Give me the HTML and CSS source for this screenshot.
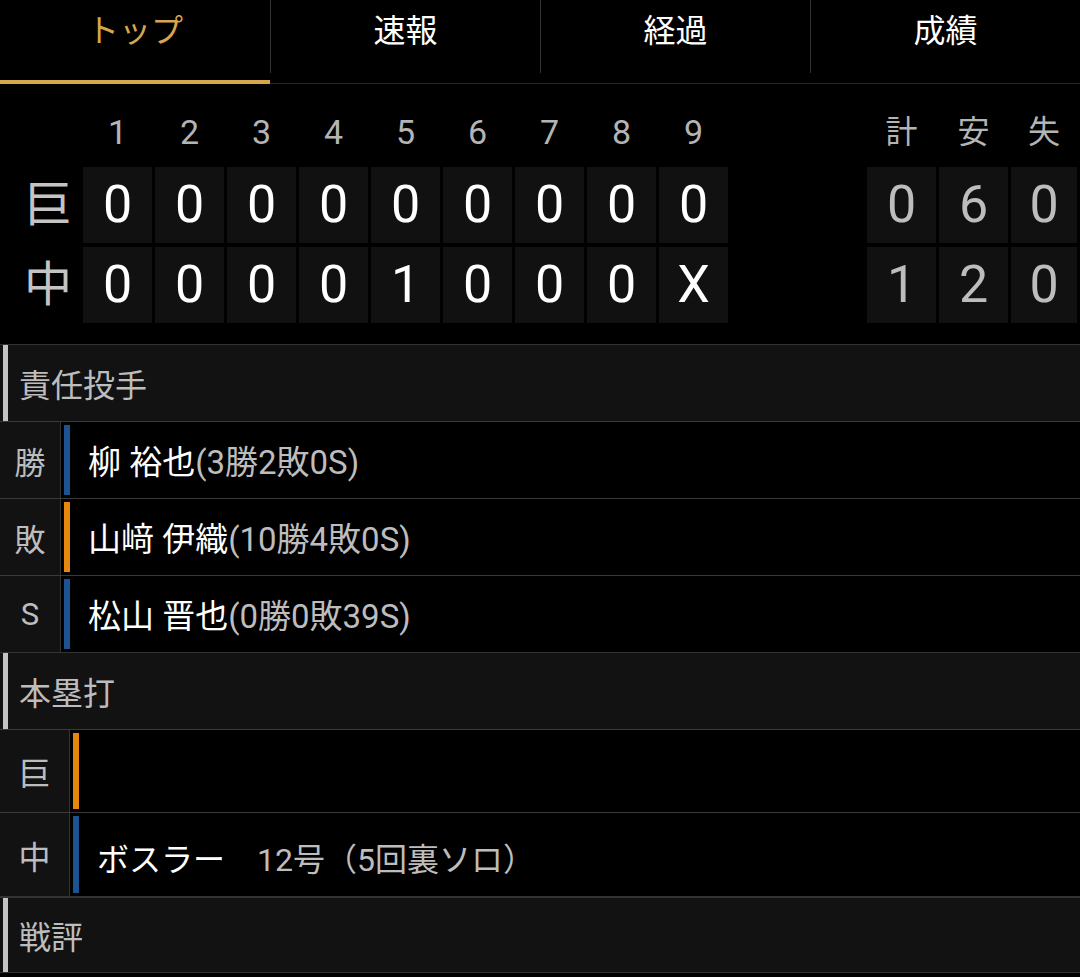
FILE: index.html
```html
<!DOCTYPE html>
<html lang="ja">
<head>
<meta charset="utf-8">
<title>試合トップ</title>
<link rel="stylesheet" href="styles.css">
</head>
<body>
<nav class="tabs">
  <div class="tab active"><div class="tab-label">トップ</div></div>
  <div class="tab"><div class="tab-label">速報</div></div>
  <div class="tab"><div class="tab-label">経過</div></div>
  <div class="tab"><div class="tab-label">成績</div></div>
</nav>

<section class="score">
  <div class="sb-row sb-head">
    <span></span>
    <span>1</span><span>2</span><span>3</span><span>4</span><span>5</span><span>6</span><span>7</span><span>8</span><span>9</span>
    <span></span>
    <span>計</span><span>安</span><span>失</span>
  </div>
  <div class="sb-row sb-line">
    <span class="team">巨</span>
    <span class="cell">0</span><span class="cell">0</span><span class="cell">0</span><span class="cell">0</span><span class="cell">0</span><span class="cell">0</span><span class="cell">0</span><span class="cell">0</span><span class="cell">0</span>
    <span class="spacer"></span>
    <span class="cell tot">0</span><span class="cell tot">6</span><span class="cell tot">0</span>
  </div>
  <div class="sb-row sb-line">
    <span class="team">中</span>
    <span class="cell">0</span><span class="cell">0</span><span class="cell">0</span><span class="cell">0</span><span class="cell">1</span><span class="cell">0</span><span class="cell">0</span><span class="cell">0</span><span class="cell">X</span>
    <span class="spacer"></span>
    <span class="cell tot">1</span><span class="cell tot">2</span><span class="cell tot">0</span>
  </div>
</section>

<section class="block">
  <h2 class="sec"><span class="sec-title">責任投手</span></h2>
  <div class="prow">
    <div class="plabel">勝</div>
    <div class="bar blue"></div>
    <div class="ptext"><span class="name">柳 裕也</span><span class="stat">(3勝2敗0S)</span></div>
  </div>
  <div class="prow">
    <div class="plabel">敗</div>
    <div class="bar orange"></div>
    <div class="ptext"><span class="name">山﨑 伊織</span><span class="stat">(10勝4敗0S)</span></div>
  </div>
  <div class="prow">
    <div class="plabel">S</div>
    <div class="bar blue"></div>
    <div class="ptext"><span class="name">松山 晋也</span><span class="stat">(0勝0敗39S)</span></div>
  </div>
</section>

<section class="block">
  <h2 class="sec"><span class="sec-title">本塁打</span></h2>
  <div class="hrow">
    <div class="hlabel">巨</div>
    <div class="bar orange"></div>
    <div class="htext"></div>
  </div>
  <div class="hrow">
    <div class="hlabel">中</div>
    <div class="bar blue"></div>
    <div class="htext"><span class="name">ボスラー</span><span class="hr-detail">12号（5回裏ソロ）</span></div>
  </div>
</section>

<section class="block">
  <h2 class="sec sec-last"><span class="sec-title">戦評</span></h2>
</section>
</body>
</html>
```

FILE: styles.css
```css
* { box-sizing: border-box; }

html, body {
  margin: 0;
  padding: 0;
  background: #000;
}

body {
  width: 1080px;
  height: 977px;
  overflow: hidden;
  color: #fff;
  font-family: Roboto, "Noto Sans CJK JP", sans-serif;
}

/* Tabs */
.tabs {
  display: flex;
  height: 84px;
}

.tab {
  flex: 1;
  height: 84px;
  box-shadow: inset 0 -1px #262626;
}

.tab-label {
  height: 73px;
  line-height: 63px;
  text-align: center;
  font-size: 32px;
  color: #fff;
  border-left: 1px solid #333;
}

.tab:first-child .tab-label { border-left: none; }

.tab.active {
  box-shadow: inset 0 -4px #d7a54d;
}

.tab.active .tab-label { color: #d7a54d; }

/* Scoreboard */
.score {
  padding-top: 24px;
  margin-bottom: 23px;
}

.sb-row {
  display: grid;
  grid-template-columns: 80px repeat(9, 69px) 133px 69px 69px 66px;
  column-gap: 3px;
}

.sb-head {
  height: 48px;
  line-height: 48px;
  margin-bottom: 11px;
  font-size: 34px;
  color: #b4b4b4;
  text-align: center;
}

.sb-head span:nth-child(n+12) { font-size: 32px; }

.sb-line {
  height: 74px;
  margin-bottom: 6px;
}

.sb-line:last-child { margin-bottom: 0; }

.team {
  padding-left: 16px;
  text-align: center;
  font-size: 48px;
  line-height: 76px;
  color: #c4c4c4;
}

.cell {
  background: #111;
  text-align: center;
  line-height: 76px;
  font-size: 52px;
  color: #fff;
}

.cell.tot { color: #bdbdbd; }

/* Sections */
.sec {
  margin: 0;
  height: 77px;
  display: flex;
  align-items: center;
  background: #121212;
  border-top: 1px solid #333;
  padding-left: 3px;
  font-weight: normal;
}

.sec-title {
  display: flex;
  align-items: center;
  height: 100%;
  border-left: 5px solid #c4c4c4;
  padding-left: 11px;
  font-size: 32px;
  color: #bdbdbd;
}

.sec-last {
  height: 77px;
  border-top: 2px solid #333;
  border-bottom: 1px solid #333;
}

.bar {
  width: 6px;
  margin: 3px 0;
  flex: none;
}

.bar.blue { background: #1d5391; }
.bar.orange { background: #e8870f; }

/* Pitcher rows */
.prow {
  display: flex;
  height: 77px;
  border-top: 1px solid #3a3a3a;
}

.plabel {
  width: 61px;
  flex: none;
  background: #121212;
  border-right: 1px solid #333;
  display: flex;
  align-items: center;
  justify-content: center;
  font-size: 31px;
  color: #bdbdbd;
  margin-right: 3px;
}

.ptext {
  display: flex;
  align-items: center;
  padding-left: 18px;
  font-size: 33px;
}

.name { color: #fff; }
.stat { color: #bdbdbd; }

/* Home run rows */
.hrow {
  display: flex;
  height: 83px;
  border-top: 1px solid #3a3a3a;
}

.hrow + .hrow { height: 84px; }

.hlabel {
  width: 70px;
  flex: none;
  background: #121212;
  border-right: 1px solid #333;
  display: flex;
  align-items: center;
  justify-content: center;
  font-size: 32px;
  color: #bdbdbd;
  margin-right: 3px;
}

.htext {
  display: flex;
  align-items: center;
  padding-left: 18px;
  padding-top: 4px;
  font-size: 32px;
}

.hr-detail {
  color: #bdbdbd;
  margin-left: 32px;
}
```
